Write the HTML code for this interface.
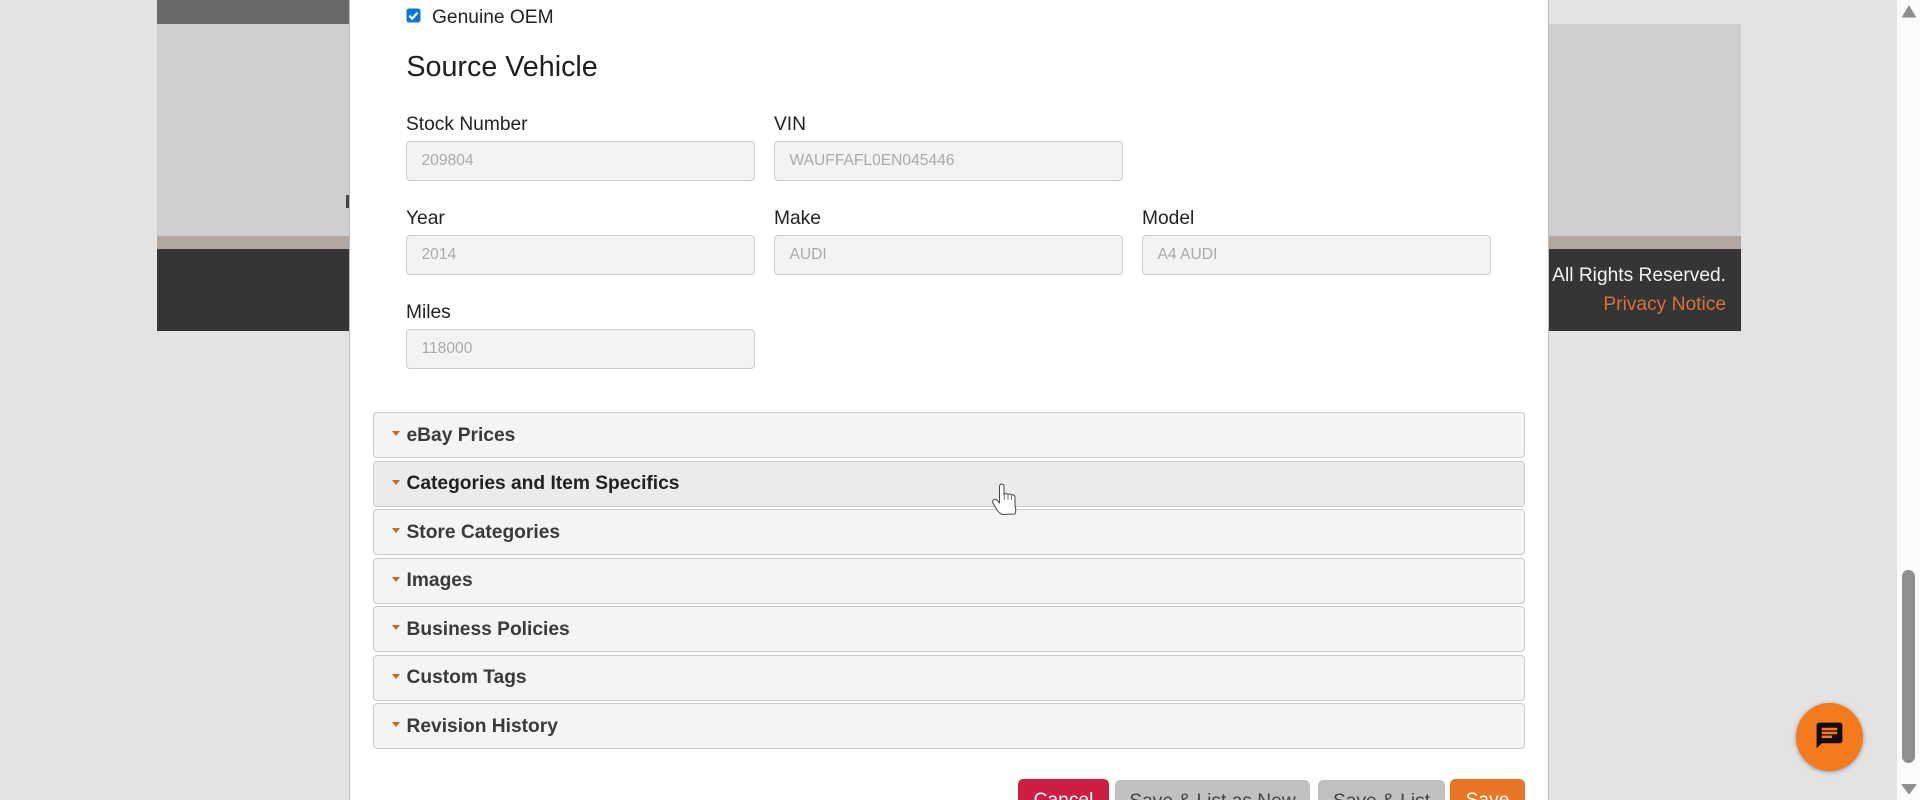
<!DOCTYPE html>
<html lang="en">
<head>
<meta charset="utf-8">
<title>Source Vehicle</title>
<style>
html,body{margin:0;padding:0;width:1920px;height:800px;overflow:hidden;background:#e3e3e3;font-family:"Liberation Sans",sans-serif;}
#p{position:relative;width:1920px;height:800px;overflow:hidden;background:#e3e3e3;}
.a{position:absolute;white-space:nowrap;box-sizing:border-box;}
.lbl{font-size:19.2px;line-height:24px;color:#222;left:406px;}
.inp{height:40px;width:349px;background:#f3f3f3;border:1px solid #cfcfcf;border-radius:4px;font-size:15.6px;line-height:38px;color:#aaa;padding-left:14.5px;}
.row{left:373px;width:1152px;height:46px;background:#f4f4f4;border:1px solid #cbcbcb;border-radius:4px;font-size:19.2px;font-weight:bold;line-height:45px;color:#3a3a3a;padding-left:32.5px;}
.row.h{background:#ebebeb;color:#222;}
.row:before{content:"";position:absolute;left:18px;top:18px;width:0;height:0;border-left:4.5px solid transparent;border-right:4.5px solid transparent;border-top:5.5px solid #c9691c;}
.btn{top:779px;height:46px;border-radius:5px;font-size:19.2px;line-height:44px;text-align:center;}
.g{background:#c0c0c0;color:#444;top:780px;}
</style>
</head>
<body>
<div id="p">
<!-- background page -->
<div class="a" style="left:157px;top:0;width:192px;height:24px;background:#696969;"></div>
<div class="a" style="left:157px;top:24px;width:1584px;height:212px;background:#cfcfcf;"></div>
<div class="a" style="left:157px;top:236px;width:1584px;height:13px;background:#b3a79f;"></div>
<div class="a" style="left:157px;top:249px;width:1584px;height:82px;background:#353535;"></div>
<div class="a" style="left:346px;top:195px;width:3px;height:13px;background:#4a4440;"></div>
<div class="a" style="right:194px;top:264px;font-size:19.2px;line-height:24px;color:#f2f2f2;">All Rights Reserved.</div>
<div class="a" style="right:194px;top:293px;font-size:19.2px;line-height:24px;color:#d9703a;">Privacy Notice</div>

<!-- modal -->
<div class="a" style="left:349px;top:0;width:1200px;height:800px;background:#fff;border-left:1px solid #bcbcbc;border-right:1px solid #bcbcbc;"></div>

<svg class="a" style="left:406px;top:8px;" width="15" height="15" viewBox="0 0 15 15"><rect x="0.5" y="0.5" width="14" height="14" rx="2.5" fill="#0f74d8"/><path d="M3.3 7.7 6.2 10.6 11.6 4.6" fill="none" stroke="#fff" stroke-width="2.2"/></svg>
<div class="a" style="left:432px;top:6px;font-size:19.2px;line-height:24px;color:#222;">Genuine OEM</div>
<div class="a" style="left:406.4px;top:50px;font-size:28.7px;line-height:34px;color:#1e1e1e;">Source Vehicle</div>

<div class="a lbl" style="top:113px;">Stock Number</div>
<div class="a lbl" style="top:113px;left:774px;">VIN</div>
<div class="a inp" style="left:406px;top:141px;">209804</div>
<div class="a inp" style="left:774px;top:141px;">WAUFFAFL0EN045446</div>

<div class="a lbl" style="top:207px;">Year</div>
<div class="a lbl" style="top:207px;left:774px;">Make</div>
<div class="a lbl" style="top:207px;left:1142px;">Model</div>
<div class="a inp" style="left:406px;top:235px;">2014</div>
<div class="a inp" style="left:774px;top:235px;">AUDI</div>
<div class="a inp" style="left:1142px;top:235px;">A4 AUDI</div>

<div class="a lbl" style="top:301px;">Miles</div>
<div class="a inp" style="left:406px;top:329px;">118000</div>

<!-- accordion -->
<div class="a row" style="top:412px;">eBay Prices</div>
<div class="a row h" style="top:461px;line-height:44px;">Categories and Item Specifics</div>
<div class="a row" style="top:509px;line-height:46px;">Store Categories</div>
<div class="a row" style="top:558px;line-height:44px;">Images</div>
<div class="a row" style="top:606px;line-height:46px;">Business Policies</div>
<div class="a row" style="top:655px;line-height:44px;">Custom Tags</div>
<div class="a row" style="top:703px;">Revision History</div>

<!-- buttons -->
<div class="a btn" style="left:1018px;width:91px;background:#cd1f45;color:#fff;">Cancel</div>
<div class="a btn g" style="left:1115px;width:195px;">Save &amp; List as New</div>
<div class="a btn g" style="left:1318px;width:127px;">Save &amp; List</div>
<div class="a btn" style="left:1450px;width:75px;background:#e67524;color:#fff;">Save</div>

<!-- hand cursor -->
<svg class="a" style="left:970px;top:460px;" width="60" height="60" viewBox="0 0 60 60"><path d="M29.5 41 L29.5 27 Q29.5 24 31.7 24 Q34 24 34 27 L34 34.5 Q36 32.8 38 34.5 Q40 33 41.5 35 Q43.5 34 45 36.5 L45 46 Q46.5 50 45 54 L33 54.5 Q30 54 27 50 L23 43 Q22 40 24.5 39.2 Q27 39 29.5 43 Z" fill="#fff" stroke="#444" stroke-width="1" stroke-linejoin="round"/><path d="M34.3 34.8 V40 M38 34.8 V40 M41.5 35.5 V40" stroke="#555" stroke-width="0.8" fill="none"/></svg>

<!-- chat -->
<div class="a" style="left:1796px;top:703px;width:67px;height:68px;border-radius:50%;background:#f47a1c;box-shadow:0 1px 4px rgba(60,70,90,.5);"></div>
<svg class="a" style="left:1814px;top:720px;" width="31" height="31" viewBox="0 0 24 24"><path fill="#120b06" d="M20 2H4c-1.1 0-1.99.9-1.99 2L2 22l4-4h14c1.1 0 2-.9 2-2V4c0-1.1-.9-2-2-2zM6 9h12v2H6V9zm8 5H6v-2h8v2zm4-6H6V6h12v2z"/></svg>

<!-- scrollbar -->
<div class="a" style="left:1897px;top:0;width:23px;height:800px;background:#fbfbfb;"></div>
<div class="a" style="left:1902px;top:570px;width:13px;height:193px;border-radius:6.5px;background:#8f8f8f;"></div>
<svg class="a" style="left:1901px;top:5px;" width="16" height="13" viewBox="0 0 16 13"><path d="M8 1 L14.5 12 H1.5 Z" fill="#8f8f8f" stroke="#8f8f8f" stroke-linejoin="round"/></svg>
<svg class="a" style="left:1901px;top:783px;" width="16" height="12" viewBox="0 0 16 12"><path d="M1 1.5 H15 L8 11 Z" fill="#8f8f8f" stroke="#8f8f8f" stroke-linejoin="round"/></svg>
</div>
</body>
</html>
